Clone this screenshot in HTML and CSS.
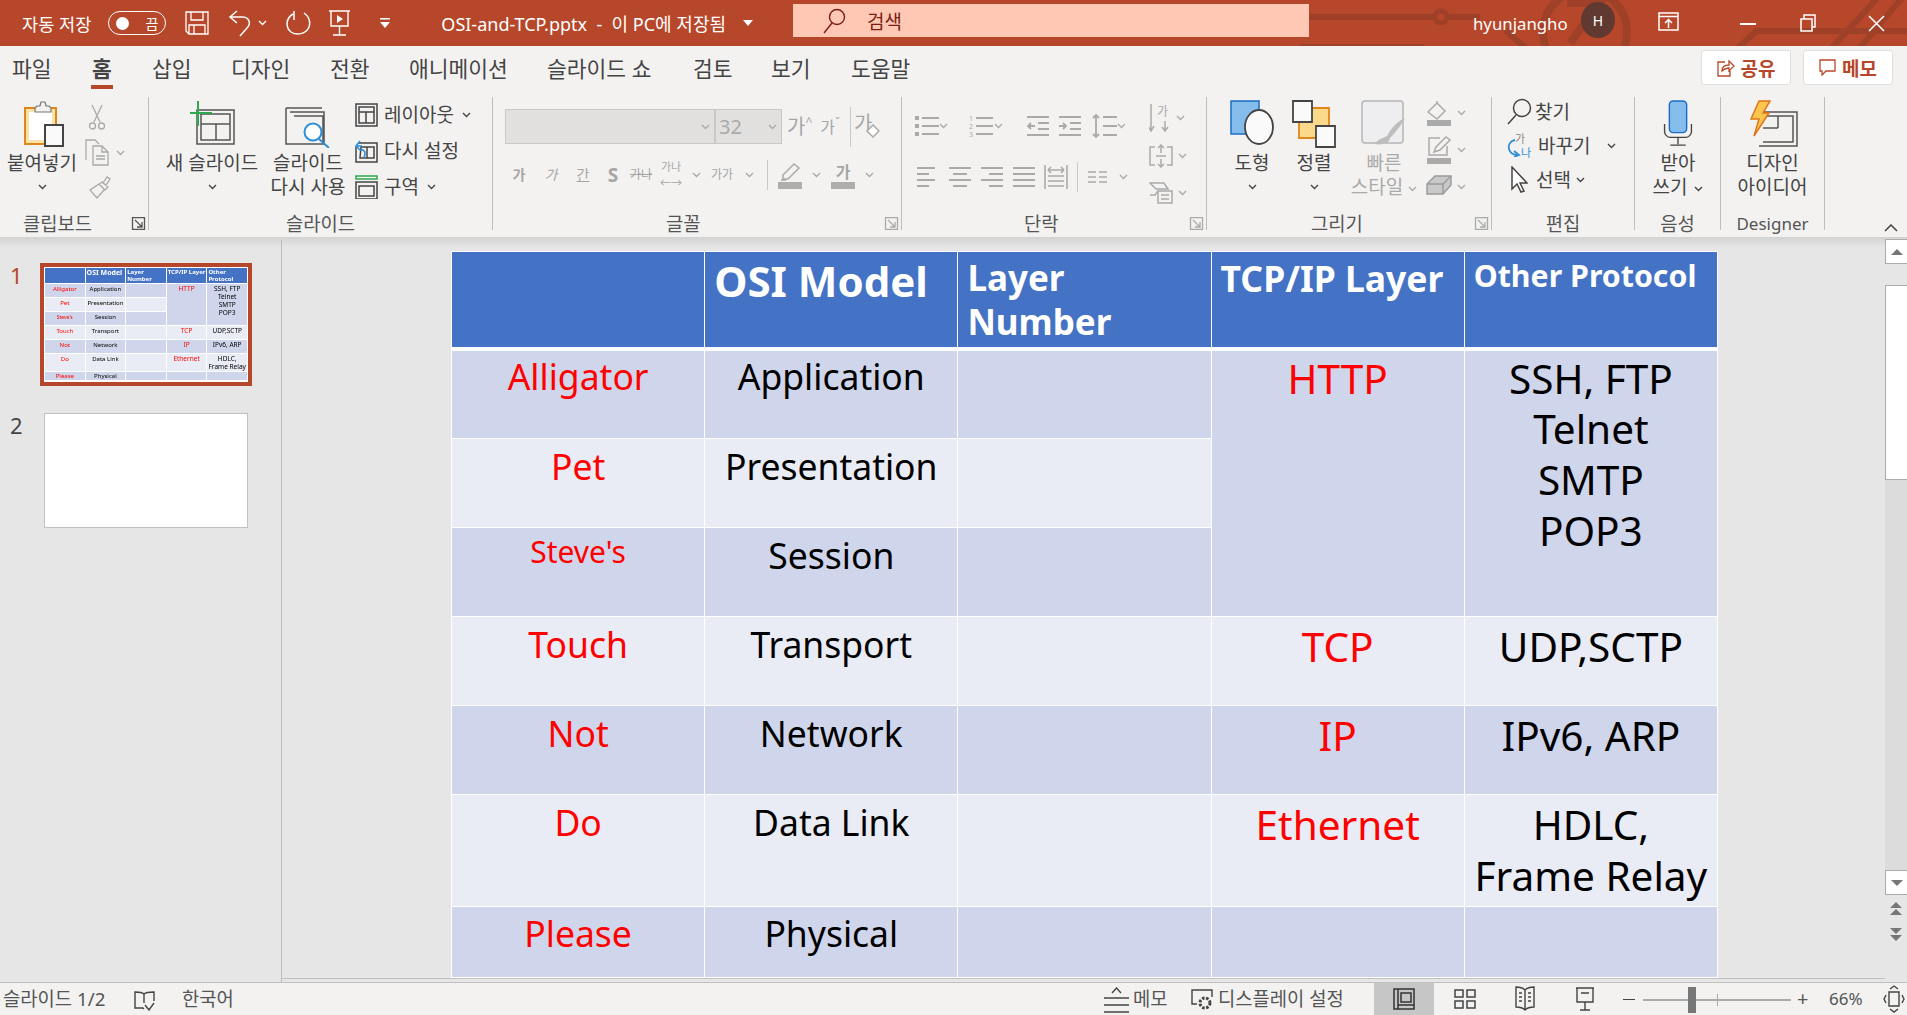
FILE: index.html
```html
<!DOCTYPE html>
<html lang="ko">
<head>
<meta charset="UTF-8">
<title>OSI-and-TCP.pptx - PowerPoint</title>
<link rel="stylesheet" href="styles.css">
</head>
<body>
<svg class="sprite">
  <symbol id="chev" viewBox="0 0 9 6"><path d="M1 1l3.5 3.5L8 1" fill="none" stroke="currentColor" stroke-width="1.4"/></symbol>
  <symbol id="launch" viewBox="0 0 13 13"><path d="M.5 12.500V.5h12v12z M3 3l7 7 M10 5v5H5" fill="none" stroke="currentColor" stroke-width="1.300"/></symbol>
</svg>

<header class="titlebar">
  <svg class="circuit" width="607" height="46" viewBox="0 0 607 46" fill="none" stroke="#9f4029" stroke-width="6">
    <path d="M0 17H133M147 17H180"/>
    <circle cx="141" cy="17" r="6" stroke-width="5"/>
    <path d="M0 47H122L135 55"/>
    <path d="M205 30L228 50"/>
    <circle cx="285" cy="32" r="42" stroke-width="8"/>
    <path d="M267 3H300L270 43" stroke-width="8"/>
    <path d="M436 50L456 31H607M530 50L580 -5M558 50L607 -8"/>
  </svg>
  <span class="autosave">자동 저장</span>
  <span class="toggle"><i class="toggle-dot"></i><b class="toggle-text">끔</b></span>
  <svg class="qa qa-save" width="24" height="24" viewBox="0 0 24 24" fill="none" stroke="#fff" stroke-width="1.300"><path d="M1 1h22v22H4l-3-3zM6 1v8h12V1M4 23v-9h16v9M9 14v9"/></svg>
  <svg class="qa qa-undo" width="25" height="28" viewBox="0 0 25 28" fill="none" stroke="#fff" stroke-width="1.500"><path d="M9 2L2 8l7 6M2 8h12c8 0 9 7 5 11l-7 8"/></svg>
  <svg class="qa-chev" width="9" height="6"><use href="#chev"/></svg>
  <svg class="qa qa-redo" width="26" height="28" viewBox="0 0 26 28" fill="none" stroke="#fff" stroke-width="1.500"><path d="M9 2v9M8 5C1 9 0 18 6 23c6 4 15 2 18-5 2-6-1-11-5-14"/></svg>
  <svg class="qa qa-show" width="23" height="28" viewBox="0 0 23 28" fill="none" stroke="#fff" stroke-width="1.400"><path d="M1 2h21M3 2v15h17V2M11.500 17v9M5 26h13"/><path d="M9 6l6 4-6 4z" fill="#fff" stroke="none"/></svg>
  <svg class="qa qa-more" width="10" height="10" viewBox="0 0 10 10" fill="#fff"><path d="M0 0h10v1.500H0zM0 4h10L5 10z"/></svg>
  <span class="filename">OSI-and-TCP.pptx &nbsp;-&nbsp; 이 PC에 저장됨</span>
  <i class="caret"></i>
  <div class="search">
    <svg width="24" height="26" viewBox="0 0 24 26" fill="none" stroke="#7b1f12" stroke-width="1.400"><circle cx="15" cy="9" r="7.500"/><path d="M10 15L2 25"/></svg>
    <span>검색</span>
  </div>
  <span class="user">hyunjangho</span>
  <span class="avatar">H</span>
  <svg class="win win-ribbon" width="21" height="19" viewBox="0 0 21 19" fill="none" stroke="#fff" stroke-width="1.500"><path d="M1 1h19v17H1zM1 4.500h19M10.500 16V8M7 11l3.500-3.500L14 11"/></svg>
  <i class="win win-min"></i>
  <svg class="win win-restore" width="16" height="18" viewBox="0 0 16 18" fill="none" stroke="#fff" stroke-width="1.500"><path d="M1 5h11v12H1zM4 5V1h11v12h-3"/></svg>
  <svg class="win win-close" width="17" height="17" viewBox="0 0 17 17" fill="none" stroke="#fff" stroke-width="1.500"><path d="M1 1l15 15M16 1L1 16"/></svg>
</header>

<nav class="tabs">
  <span class="tab tab-file">파일</span>
  <span class="tab tab-home">홈</span>
  <span class="tab tab-insert">삽입</span>
  <span class="tab tab-design">디자인</span>
  <span class="tab tab-trans">전환</span>
  <span class="tab tab-anim">애니메이션</span>
  <span class="tab tab-show">슬라이드 쇼</span>
  <span class="tab tab-review">검토</span>
  <span class="tab tab-view">보기</span>
  <span class="tab tab-help">도움말</span>
  <span class="action action-share">
    <svg width="18" height="18" viewBox="0 0 18 18" fill="none" stroke="#b7472a" stroke-width="1.300"><path d="M8 3H1v14h12v-5M5 12c0-4 3-6 7-6V2l5 5-5 5V9c-3 0-5 1-7 3z"/></svg>
    공유
  </span>
  <span class="action action-memo">
    <svg width="17" height="17" viewBox="0 0 17 17" fill="none" stroke="#b7472a" stroke-width="1.300"><path d="M1 1h15v11H7l-4 4v-4H1z"/></svg>
    메모
  </span>
</nav>

<section class="ribbon">

  <div class="group g-clip">
    <div class="group-body">
      <div class="big big-paste">
        <svg width="44" height="46" viewBox="0 0 44 46"><path d="M1 7h31v36H1z" fill="#fbe3a8" stroke="#e0861a" stroke-width="2"/><path d="M5 11h23v28H5z" fill="#fff"/><path d="M11 7l2-2h3l1-4h4l1 4h3l2 2v4H11z" fill="#f3f2f1" stroke="#777" stroke-width="1.200"/><path d="M21 24h18v21H21z" fill="#fafafa" stroke="#444" stroke-width="2"/></svg>
        <span class="big-text">붙여넣기</span>
        <svg class="chev" width="9" height="6"><use href="#chev"/></svg>
      </div>
      <div class="clip-tools">
        <svg class="clip-cut" width="18" height="26" viewBox="0 0 18 26" fill="none" stroke="#a9a9a9" stroke-width="1.300"><path d="M4 1l8 17M14 1L6 18"/><circle cx="4.500" cy="22" r="3"/><circle cx="13.500" cy="22" r="3"/></svg>
        <span class="clip-copy">
          <svg width="26" height="27" viewBox="0 0 26 27" fill="none" stroke="#a9a9a9" stroke-width="1.300"><path d="M1 21V1h9l4 4M8 7h9l6 6v13H8zM17 7v6h6M11 17h9M11 20h9"/></svg>
          <svg class="chev-off" width="9" height="6"><use href="#chev"/></svg>
        </span>
        <svg class="clip-brush" width="24" height="24" viewBox="0 0 24 24" fill="none" stroke="#a9a9a9" stroke-width="1.300"><path d="M16 8l4-6 3 2-4 6zM15 7l6 5-3 3-6-6zM12 9l-9 6 7 8 7-8"/></svg>
      </div>
    </div>
    <div class="group-label label-clip">클립보드<svg class="launch" width="15" height="13"><use href="#launch"/></svg></div>
  </div>

  <div class="group g-slide">
    <div class="group-body">
      <div class="big big-new">
        <svg width="46" height="48" viewBox="0 0 46 48" fill="none"><path d="M8 10h37v34H8z M12 14h29v26H12zM12 24h29M27 24v16" stroke="#555" stroke-width="1.500"/><path d="M9 1v25M1 13h22" stroke="#2fa84f" stroke-width="2"/></svg>
        <span class="big-text">새 슬라이드</span>
        <svg class="chev" width="9" height="6"><use href="#chev"/></svg>
      </div>
      <div class="big big-reuse">
        <svg width="46" height="48" viewBox="0 0 46 48" fill="none"><path d="M1 8h36M1 8v36h8M5 12h34v32H5M9 16h29v28" stroke="#555" stroke-width="1.500"/><circle cx="28" cy="32" r="8.500" fill="#fff" stroke="#2e8fd6" stroke-width="2"/><path d="M34 39l10 9" stroke="#2e8fd6" stroke-width="2"/></svg>
        <span class="big-text">슬라이드<br>다시 사용</span>
      </div>
      <div class="small-col small-slide">
        <span class="small">
          <svg width="23" height="24" viewBox="0 0 23 24" fill="none" stroke="#444" stroke-width="1.500"><path d="M1 1h21v22H1zM4 4h15v16H4zM4 9h15M11 9v11"/></svg>
          레이아웃 <svg class="chev" width="9" height="6"><use href="#chev"/></svg>
        </span>
        <span class="small">
          <svg width="23" height="24" viewBox="0 0 23 24" fill="none"><path d="M3 4h19v19H1V8M6 8h13v11H5zM12 8v11" stroke="#444" stroke-width="1.500"/><path d="M7 7H1l4-5M1 7l4 4c5-1 6 3 4 7" stroke="#2e8fd6" stroke-width="1.600"/></svg>
          다시 설정
        </span>
        <span class="small">
          <svg width="23" height="24" viewBox="0 0 23 24" fill="none" stroke="#444" stroke-width="1.500"><path d="M1 7h21v17H1zM4 11h15v10H4z"/><path d="M1 1h21v3H1z" stroke="#2fa84f"/></svg>
          구역 <svg class="chev" width="9" height="6"><use href="#chev"/></svg>
        </span>
      </div>
    </div>
    <div class="group-label label-slide">슬라이드</div>
  </div>

  <div class="group g-font">
    <div class="group-body font-body">
      <div class="font-row1">
        <span class="font-box font-name"><svg class="chev-off" width="9" height="6"><use href="#chev"/></svg></span>
        <span class="font-box font-size">32<svg class="chev-off" width="9" height="6"><use href="#chev"/></svg></span>
        <span class="glyph glyph-lg">가<sup>^</sup></span>
        <span class="glyph glyph-md">가<sup>ˇ</sup></span>
        <i class="vsep vsep-tall"></i>
        <span class="glyph-clear">
          <span class="glyph glyph-lg">가</span>
          <svg width="15" height="15" viewBox="0 0 15 15" fill="#fff" stroke="#aaa" stroke-width="1.500"><path d="M8 1l6 6-6 6-6-6z"/></svg>
        </span>
      </div>
      <div class="font-row2">
        <b class="glyph">가</b>
        <em class="glyph">가</em>
        <u class="glyph">간</u>
        <span class="glyph glyph-s">S</span>
        <s class="glyph glyph-xs">가나</s>
        <span class="glyph-space"><span>가나</span><i>←→</i></span>
        <svg class="chev-off" width="9" height="6"><use href="#chev"/></svg>
        <span class="glyph glyph-xs">가가</span>
        <svg class="chev-off" width="9" height="6"><use href="#chev"/></svg>
        <i class="vsep"></i>
        <span class="colour">
          <svg width="22" height="20" viewBox="0 0 22 20" fill="none" stroke="#aaa" stroke-width="1.500"><path d="M4 13L15 2l5 4L9 17H4zM2 18h5"/></svg>
          <i class="colour-bar"></i>
        </span>
        <svg class="chev-off" width="9" height="6"><use href="#chev"/></svg>
        <span class="colour">
          <b class="glyph">가</b>
          <i class="colour-bar"></i>
        </span>
        <svg class="chev-off" width="9" height="6"><use href="#chev"/></svg>
      </div>
    </div>
    <div class="group-label label-font">글꼴<svg class="launch launch-off" width="15" height="13"><use href="#launch"/></svg></div>
  </div>

  <div class="group g-para">
    <div class="group-body para-body">
      <div class="para-rows">
        <div class="para-row1">
          <svg width="24" height="24" viewBox="0 0 24 24" stroke="#aaa" stroke-width="2" fill="none"><path d="M7 4h17M7 12h17M7 20h17"/><path d="M0 2h4v4H0zM0 10h4v4H0zM0 18h4v4H0z" fill="#aaa" stroke="none"/></svg>
          <svg class="chev-off" width="9" height="6"><use href="#chev"/></svg>
          <svg width="24" height="24" viewBox="0 0 24 24" stroke="#aaa" stroke-width="2" fill="none"><path d="M7 4h17M7 12h17M7 20h17"/><text x="0" y="7" class="svg-num">1</text><text x="0" y="15" class="svg-num">2</text><text x="0" y="23" class="svg-num">3</text></svg>
          <svg class="chev-off" width="9" height="6"><use href="#chev"/></svg>
          <svg width="23" height="24" viewBox="0 0 23 24" stroke="#aaa" stroke-width="1.800" fill="none"><path d="M1 3h22M1 21h22M12 9h11M12 15h11M9 12H2M5 9l-3 3 3 3"/></svg>
          <svg width="23" height="24" viewBox="0 0 23 24" stroke="#aaa" stroke-width="1.800" fill="none"><path d="M1 3h22M1 21h22M12 9h11M12 15h11M1 12h7M5 9l3 3-3 3"/></svg>
          <svg width="25" height="24" viewBox="0 0 25 24" stroke="#aaa" stroke-width="1.800" fill="none"><path d="M11 3h14M11 12h14M11 21h14M4 1v22M1 4l3-3 3 3M1 20l3 3 3-3"/></svg>
          <svg class="chev-off" width="9" height="6"><use href="#chev"/></svg>
        </div>
        <div class="para-row2">
          <svg width="18" height="22" viewBox="0 0 18 22" stroke="#aaa" stroke-width="2"><path d="M0 2h18M0 8h12M0 14h18M0 20h12"/></svg>
          <svg width="22" height="22" viewBox="0 0 22 22" stroke="#aaa" stroke-width="2"><path d="M0 2h22M4 8h14M0 14h22M4 20h14"/></svg>
          <svg width="22" height="22" viewBox="0 0 22 22" stroke="#aaa" stroke-width="2"><path d="M0 2h22M8 8h14M0 14h22M8 20h14"/></svg>
          <svg width="22" height="22" viewBox="0 0 22 22" stroke="#aaa" stroke-width="2"><path d="M0 2h22M0 8h22M0 14h22M0 20h22"/></svg>
          <svg width="24" height="24" viewBox="0 0 24 24" stroke="#aaa" stroke-width="1.600" fill="none"><path d="M1 0v24M23 0v24M4 11h16M4 16h16M4 21h16M4 5h16M4 5l3-3M4 5l3 3M20 5l-3-3M20 5l-3 3"/></svg>
          <i class="vsep"></i>
          <svg width="19" height="14" viewBox="0 0 19 14" stroke="#aaa" stroke-width="1.600"><path d="M0 2h8M11 2h8M0 7h8M11 7h8M0 12h8M11 12h8"/></svg>
          <svg class="chev-off" width="9" height="6"><use href="#chev"/></svg>
        </div>
      </div>
      <div class="para-side">
        <span class="para-tool">
          <svg width="22" height="30" viewBox="0 0 22 30" fill="none" stroke="#aaa" stroke-width="1.500"><path d="M2 1v26M-1 23l3 5 3-5M16 18v10M13 24l3 4 3-4"/><text x="8" y="13" class="svg-ko">가</text></svg>
          <svg class="chev-off" width="9" height="6"><use href="#chev"/></svg>
        </span>
        <span class="para-tool">
          <svg width="24" height="24" viewBox="0 0 24 24" fill="none" stroke="#aaa" stroke-width="1.500"><path d="M6 3H1v18h5M18 3h5v18h-5M7 12h10M12 1v8M9 4l3-3 3 3M12 15v8M9 20l3 3 3-3"/></svg>
          <svg class="chev-off" width="9" height="6"><use href="#chev"/></svg>
        </span>
        <span class="para-tool">
          <svg width="24" height="22" viewBox="0 0 24 22" fill="none" stroke="#aaa" stroke-width="1.500"><path d="M1 1h14l4 6H7zM1 13h5l3-4"/><path d="M9 9h14v12H9zM12 13h8M12 17h8"/></svg>
          <svg class="chev-off" width="9" height="6"><use href="#chev"/></svg>
        </span>
      </div>
    </div>
    <div class="group-label label-para">단락<svg class="launch launch-off" width="15" height="13"><use href="#launch"/></svg></div>
  </div>

  <div class="group g-draw">
    <div class="group-body">
      <div class="big big-shape">
        <svg width="44" height="48" viewBox="0 0 44 48"><path d="M1 1h28v33H1z" fill="#84bcec" stroke="#1b6ec2" stroke-width="1.500"/><ellipse cx="29" cy="27" rx="14" ry="17" fill="#fafafa" stroke="#444" stroke-width="1.800"/></svg>
        <span class="big-text">도형</span>
        <svg class="chev" width="9" height="6"><use href="#chev"/></svg>
      </div>
      <div class="big big-arrange">
        <svg width="44" height="48" viewBox="0 0 44 48"><path d="M7 8h30v30H7z" fill="#fbd98a" stroke="#e0861a" stroke-width="1.800"/><path d="M1 1h19v21H1zM24 26h19v21H24z" fill="#fafafa" stroke="#444" stroke-width="1.800"/></svg>
        <span class="big-text">정렬</span>
        <svg class="chev" width="9" height="6"><use href="#chev"/></svg>
      </div>
      <div class="big big-quick">
        <svg width="46" height="48" viewBox="0 0 46 48" fill="none"><rect x="1" y="1" width="41" height="42" rx="3" fill="#eeeef0" stroke="#b5b5b5" stroke-width="1.500"/><path d="M44 18C38 20 30 28 26 36l-4 2c-4 1-7 4-9 6 6 1 11 0 14-2 2-2 2-4 2-4 6-6 12-14 15-20z" fill="#bdbdbd"/></svg>
        <span class="big-text big-off">빠른<br>스타일 <svg class="chev-off" width="9" height="6"><use href="#chev"/></svg></span>
      </div>
      <div class="draw-side">
        <span class="para-tool">
          <svg width="26" height="26" viewBox="0 0 26 26" fill="none" stroke="#aaa" stroke-width="1.500"><path d="M2 12l9-9 8 8-8 8zM11 3V1"/><path d="M1 20h24v6H1z" fill="#aaa" stroke="none"/></svg>
          <svg class="chev-off" width="9" height="6"><use href="#chev"/></svg>
        </span>
        <span class="para-tool">
          <svg width="26" height="28" viewBox="0 0 26 28" fill="none" stroke="#aaa" stroke-width="1.500"><path d="M14 2H3v17h18V10M8 16l2-5L20 1l4 3-10 10z"/><path d="M1 22h24v6H1z" fill="#aaa" stroke="none"/></svg>
          <svg class="chev-off" width="9" height="6"><use href="#chev"/></svg>
        </span>
        <span class="para-tool">
          <svg width="26" height="24" viewBox="0 0 26 24" stroke="#999" stroke-width="1.400"><path d="M1 9l8-8h16v9l-8 9H1z" fill="#c9c9c9"/><path d="M1 9h16v10M17 9l8-8" fill="none"/></svg>
          <svg class="chev-off" width="9" height="6"><use href="#chev"/></svg>
        </span>
      </div>
    </div>
    <div class="group-label label-draw">그리기<svg class="launch launch-off" width="15" height="13"><use href="#launch"/></svg></div>
  </div>

  <div class="group g-edit">
    <div class="group-body small-col edit-col">
      <span class="small">
        <svg width="25" height="27" viewBox="0 0 25 27" fill="none" stroke="#444" stroke-width="1.500"><circle cx="15" cy="10" r="8.500"/><path d="M9 17L1 26"/></svg>
        찾기
      </span>
      <span class="small">
        <span class="replace-ico"><i>가</i><svg width="17" height="18" viewBox="0 0 17 18" fill="none" stroke="#2e8fd6" stroke-width="1.800"><path d="M8 1C3 2 1 6 2 10s5 6 9 6M7 12l5 4-5 2"/></svg><b>나</b></span>
        바꾸기 <svg class="chev chev-far" width="9" height="6"><use href="#chev"/></svg>
      </span>
      <span class="small">
        <svg class="pointer" width="18" height="27" viewBox="0 0 18 27" fill="#fff" stroke="#444" stroke-width="1.500"><path d="M2 1v22l5-5 4 8 3-1-4-8h7z"/></svg>
        선택 <svg class="chev" width="9" height="6"><use href="#chev"/></svg>
      </span>
    </div>
    <div class="group-label">편집</div>
  </div>

  <div class="group g-voice">
    <div class="group-body">
      <div class="big big-mic">
        <svg width="30" height="50" viewBox="0 0 30 50" fill="none"><rect x="6" y="1" width="18" height="33" rx="4" fill="#84bcec" stroke="#1b6ec2" stroke-width="1.500"/><path d="M1 25v8c0 3 3 6 6 6h16c3 0 6-3 6-6v-8M15 39v7M7 47h16" stroke="#444" stroke-width="1.400"/></svg>
        <span class="big-text">받아<br>쓰기 <svg class="chev" width="9" height="6"><use href="#chev"/></svg></span>
      </div>
    </div>
    <div class="group-label">음성</div>
  </div>

  <div class="group g-ideas">
    <div class="group-body">
      <div class="big big-ideas">
        <svg width="50" height="48" viewBox="0 0 50 48" fill="none"><path d="M11 12h38v34H11M15 16h30v26H15M30 16v12M30 28H15" stroke="#555" stroke-width="1.500"/><path d="M11 1h11l-7 12h6L6 36l5-17H3z" fill="#fbc550" stroke="#e0761a" stroke-width="1.500"/></svg>
        <span class="big-text">디자인<br>아이디어</span>
      </div>
    </div>
    <div class="group-label label-latin">Designer</div>
  </div>

  <svg class="collapse" width="14" height="8" viewBox="0 0 14 8" fill="none" stroke="#444" stroke-width="1.500"><path d="M1 7l6-6 6 6"/></svg>
</section>

<main class="main">
  <aside class="thumbs">
    <div class="thumb-row">
      <span class="thumb-num thumb-num-on">1</span>
      <div class="thumb thumb-on">
        <table class="slide-table mini">
          <tr class="head"><td></td><td class="h-osi">OSI Model</td><td class="h-layer">Layer Number</td><td class="h-tcp">TCP/IP Layer</td><td class="h-other">Other Protocol</td></tr>
          <tr class="dark r-one"><td class="red">Alligator</td><td>Application</td><td></td><td class="red big-cell" rowspan="3">HTTP</td><td class="big-cell" rowspan="3">SSH, FTP<br>Telnet<br>SMTP<br>POP3</td></tr>
          <tr class="light"><td class="red">Pet</td><td>Presentation</td><td></td></tr>
          <tr class="dark"><td class="red tiny">Steve's</td><td>Session</td><td></td></tr>
          <tr class="light"><td class="red">Touch</td><td>Transport</td><td></td><td class="red big-cell">TCP</td><td class="big-cell">UDP,SCTP</td></tr>
          <tr class="dark"><td class="red">Not</td><td>Network</td><td></td><td class="red big-cell">IP</td><td class="big-cell">IPv6, ARP</td></tr>
          <tr class="light r-tall"><td class="red">Do</td><td>Data Link</td><td></td><td class="red big-cell">Ethernet</td><td class="big-cell">HDLC,<br>Frame Relay</td></tr>
          <tr class="dark r-last"><td class="red">Please</td><td>Physical</td><td></td><td></td><td></td></tr>
        </table>
      </div>
    </div>
    <div class="thumb-row thumb-row-2">
      <span class="thumb-num">2</span>
      <div class="thumb thumb-empty"></div>
    </div>
  </aside>

  <div class="canvas">
    <table class="slide-table">
      <tr class="head"><td></td><td class="h-osi">OSI Model</td><td class="h-layer">Layer Number</td><td class="h-tcp">TCP/IP Layer</td><td class="h-other">Other Protocol</td></tr>
      <tr class="dark r-one"><td class="red">Alligator</td><td>Application</td><td></td><td class="red big-cell" rowspan="3">HTTP</td><td class="big-cell" rowspan="3">SSH, FTP<br>Telnet<br>SMTP<br>POP3</td></tr>
      <tr class="light"><td class="red">Pet</td><td>Presentation</td><td></td></tr>
      <tr class="dark"><td class="red tiny">Steve's</td><td>Session</td><td></td></tr>
      <tr class="light"><td class="red">Touch</td><td>Transport</td><td></td><td class="red big-cell">TCP</td><td class="big-cell">UDP,SCTP</td></tr>
      <tr class="dark"><td class="red">Not</td><td>Network</td><td></td><td class="red big-cell">IP</td><td class="big-cell">IPv6, ARP</td></tr>
      <tr class="light r-tall"><td class="red">Do</td><td>Data Link</td><td></td><td class="red big-cell">Ethernet</td><td class="big-cell">HDLC,<br>Frame Relay</td></tr>
      <tr class="dark r-last"><td class="red">Please</td><td>Physical</td><td></td><td></td><td></td></tr>
    </table>
  </div>

  <div class="scrollbar">
    <span class="sb-btn"><i class="tri-up"></i></span>
    <span class="sb-thumb"></span>
    <span class="sb-track"></span>
    <span class="sb-btn"><i class="tri-down"></i></span>
    <span class="sb-page"><i class="tri-up"></i><i class="tri-up tri-stack"></i></span>
    <span class="sb-page"><i class="tri-down"></i><i class="tri-down tri-stack"></i></span>
  </div>
</main>

<footer class="status">
  <span class="st-count">슬라이드 1/2</span>
  <svg class="st-book" width="21" height="20" viewBox="0 0 21 20" fill="none" stroke="#444" stroke-width="1.400"><path d="M10 3C8 1 4 1 1 1v16h8l1 1M10 3c2-2 6-2 10-2v9M10 3v9M11 14l4 5 5-7"/></svg>
  <span class="st-lang">한국어</span>
  <svg class="st-memo" width="25" height="26" viewBox="0 0 25 26" fill="none" stroke="#444" stroke-width="1.400"><path d="M8 6l4.500-5L17 6M0 11h25M0 18h25M0 25h25"/></svg>
  <span class="st-memo-text">메모</span>
  <svg class="st-display" width="23" height="22" viewBox="0 0 23 22" fill="none" stroke="#444" stroke-width="1.400"><path d="M6 15H1V1h20v7"/><circle cx="14" cy="14" r="5" stroke-width="3" stroke-dasharray="2.500 1.500"/></svg>
  <span class="st-display-text">디스플레이 설정</span>
  <span class="view view-on"><svg width="22" height="22" viewBox="0 0 22 22" fill="none" stroke="#333" stroke-width="1.500"><path d="M1 1h20v20H1zM5 1v20M8 5h10v9H8zM5 17h16"/></svg></span>
  <span class="view view-sort"><svg width="22" height="22" viewBox="0 0 22 22" fill="none" stroke="#444" stroke-width="1.500"><path d="M1 2h8v7H1zM13 2h8v7h-8zM1 13h8v7H1zM13 13h8v7h-8z"/></svg></span>
  <span class="view view-read"><svg width="20" height="26" viewBox="0 0 20 26" fill="none" stroke="#444" stroke-width="1.400"><path d="M10 4C8 2 4 1 1 1v20c3 0 7 1 9 3 2-2 6-3 9-3V1c-3 0-7 1-9 3zM10 4v20M4 7h3M4 11h3M4 15h3M13 7h3M13 11h3M13 15h3"/></svg></span>
  <span class="view view-show"><svg width="20" height="24" viewBox="0 0 20 24" fill="none" stroke="#444" stroke-width="1.400"><path d="M1 1h18M2 1v14h16V1M10 15v8M5 23h10M6 6h8"/></svg></span>
  <i class="zoom-minus"></i>
  <span class="slider"><i class="slider-tick"></i><i class="slider-knob"></i></span>
  <span class="zoom-plus">+</span>
  <span class="zoom-val">66%</span>
  <svg class="st-fit" width="22" height="28" viewBox="0 0 22 28" fill="none" stroke="#444" stroke-width="1.400"><path d="M6 7h10v14H6zM7 4l4-3 4 3M7 24l4 3 4-3M3 10l-2 4 2 4M19 10l2 4-2 4"/></svg>
</footer>
</body>
</html>
```

FILE: styles.css
```css
* {
  box-sizing: border-box;
}
html, body {
  margin: 0;
  height: 100%;
}
body {
  width: 1907px;
  height: 1015px;
  overflow: hidden;
  display: flex;
  flex-direction: column;
  font-family: "Noto Sans", "Noto Sans CJK KR", sans-serif;
  font-size: 19px;
  color: #444;
  background-color: #f3f2f1;
}
i {
  font-style: normal;
}
svg {
  flex: none;
  display: block;
}
.sprite {
  display: none;
}

/* title bar */
.titlebar {
  position: relative;
  height: 46px;
  flex: none;
  display: flex;
  align-items: center;
  color: #fff;
  background-color: #b7472a;
  overflow: hidden;
}
.circuit {
  position: absolute;
  top: 0;
  right: 0;
}
.titlebar > *:not(.circuit) {
  position: relative;
}
.autosave {
  margin-left: 22px;
  font-size: 17.6px;
}
.toggle {
  width: 58px;
  height: 24px;
  margin-left: 17px;
  padding: 0 7px;
  display: flex;
  align-items: center;
  justify-content: space-between;
  border: 1px solid #fff;
  border-radius: 12px;
}
.toggle-dot {
  width: 13px;
  height: 13px;
  border-radius: 50%;
  background-color: #fff;
}
.toggle-text {
  font-size: 14px;
  font-weight: 400;
}
.qa-save { margin-left: 19px; }
.qa-undo { margin-left: 19px; }
.qa-chev { margin-left: 5px; }
.qa-redo { margin-left: 18px; }
.qa-show { margin-left: 17px; }
.qa-more { margin-left: 29px; }
.filename {
  margin-left: 51px;
  font-size: 18px;
  white-space: nowrap;
}
.caret {
  width: 0;
  height: 0;
  margin-left: 17px;
  border: 5px solid transparent;
  border-top: 6px solid #fff;
  border-bottom: 0;
}
.search {
  position: absolute !important;
  left: 793px;
  top: 4px;
  width: 516px;
  height: 33px;
  padding-left: 29px;
  display: flex;
  align-items: center;
  gap: 21px;
  font-size: 19px;
  color: #7b1f12;
  background-color: #fec8b4;
}
.user {
  position: absolute !important;
  left: 1473px;
  font-size: 16.8px;
}
.avatar {
  position: absolute !important;
  left: 1581px;
  top: 2px;
  width: 34px;
  height: 36px;
  display: flex;
  align-items: center;
  justify-content: center;
  border-radius: 50%;
  font-size: 14px;
  background-color: #603a30;
}
.win {
  position: absolute !important;
}
.win-ribbon { left: 1658px; top: 12px; }
.win-min { left: 1740px; top: 23px; width: 16px; height: 2px; background-color: #fff; }
.win-restore { left: 1800px; top: 14px; }
.win-close { left: 1868px; top: 15px; }

/* tabs */
.tabs {
  position: relative;
  height: 46px;
  flex: none;
  display: flex;
  align-items: center;
  font-size: 21.5px;
}
.tab {
  position: absolute;
  top: 9px;
  line-height: 28px;
  white-space: nowrap;
}
.tab-file { left: 12px; }
.tab-home { left: 92px; font-weight: 700; }
.tab-home::after {
  content: "";
  position: absolute;
  left: -1px;
  right: -1px;
  top: 30px;
  height: 4px;
  background-color: #b7472a;
}
.tab-insert { left: 152px; }
.tab-design { left: 231px; }
.tab-trans { left: 330px; }
.tab-anim { left: 409px; }
.tab-show { left: 547px; }
.tab-review { left: 693px; }
.tab-view { left: 771px; }
.tab-help { left: 851px; }
.action {
  position: absolute;
  top: 4px;
  height: 35px;
  display: flex;
  align-items: center;
  justify-content: center;
  gap: 6px;
  font-size: 19px;
  font-weight: 700;
  color: #b7472a;
  background-color: #fff;
  border: 1px solid #e1dfdd;
  border-radius: 3px;
}
.action-share { left: 1701px; width: 90px; }
.action-memo { left: 1803px; width: 90px; }

/* ribbon */
.ribbon {
  height: 145px;
  flex: none;
  display: flex;
  padding: 5px 0 7px;
  line-height: 24px;
  position: relative;
}
.group {
  flex: none;
  display: flex;
  flex-direction: column;
  border-right: 1px solid #bdbdbd;
}
.group-body {
  flex: 1;
  display: flex;
  min-height: 0;
}
.group-label {
  height: 18px;
  position: relative;
  font-size: 18.8px;
  line-height: 24px;
  text-align: center;
  color: #555;
}
.label-latin {
  font-size: 17px;
}
.launch {
  position: absolute;
  right: 2px;
  top: 5px;
  color: #555;
}
.launch-off {
  color: #aaa;
}
.g-clip { width: 149px; }
.g-slide { width: 344px; }
.g-font { width: 409px; }
.g-para { width: 305px; }
.g-draw { width: 285px; }
.g-edit { width: 143px; }
.g-voice { width: 86px; }
.g-ideas { width: 104px; }
.label-clip { text-align: left; padding-left: 23px; }
.label-slide { text-align: left; padding-left: 137px; }
.label-font { text-align: left; padding-left: 173px; }
.label-para { text-align: left; padding-left: 122px; }
.label-draw { text-align: left; padding-left: 104px; }

.big {
  flex: none;
  display: flex;
  flex-direction: column;
  align-items: center;
  padding-top: 3px;
}
.big > svg:first-child {
  height: 48px;
  margin-bottom: 3px;
}
.big-text {
  text-align: center;
  white-space: nowrap;
}
.big-text .chev,
.big-text .chev-off {
  display: inline-block;
  vertical-align: middle;
}
.big-off {
  color: #aaa;
}
.big > .chev {
  margin-top: 9px;
}
.chev {
  color: #444;
}
.chev-off {
  color: #aaa;
}

.big-paste { width: 74px; margin-left: 5px; }
.big-paste > svg:first-child { margin-left: 8px; }
.clip-tools {
  margin-left: 6px;
  padding-top: 7px;
  display: flex;
  flex-direction: column;
  gap: 9px;
}
.clip-cut { margin-left: 3px; }
.clip-brush { margin-left: 2px; }
.clip-copy {
  display: flex;
  align-items: center;
  gap: 5px;
}
.big-new { width: 96px; margin-left: 15px; }
.big-reuse { width: 80px; margin-left: 8px; }
.small-col {
  display: flex;
  flex-direction: column;
  gap: 11px;
}
.small-slide {
  margin-left: 7px;
  padding-top: 5px;
}
.small {
  height: 25px;
  display: flex;
  align-items: center;
  gap: 6px;
  white-space: nowrap;
}
.small .chev {
  margin-left: 2px;
}

/* font group */
.font-body {
  flex-direction: column;
  padding: 12px 0 0 12px;
}
.font-row1 {
  display: flex;
  align-items: center;
  height: 35px;
}
.font-box {
  height: 35px;
  display: flex;
  align-items: center;
  justify-content: flex-end;
  padding-right: 4px;
  color: #aaa;
  background-color: #e1e0de;
  border: 1px solid #c8c8c8;
}
.font-name { width: 210px; }
.font-size {
  width: 67px;
  justify-content: space-between;
  padding-left: 3px;
  font-size: 20px;
}
.glyph {
  color: #a6a6a6;
  font-size: 14px;
  line-height: 18px;
}
.glyph sup {
  font-size: 12px;
  line-height: 0;
}
.glyph-lg { font-size: 20px; margin-left: 5px; }
.glyph-md { font-size: 16px; margin-left: 8px; }
.glyph-s { font-size: 19px; font-weight: 700; }
.glyph-xs { font-size: 12px; }
.vsep {
  width: 1px;
  height: 30px;
  background-color: #c8c8c8;
}
.vsep-tall {
  height: 40px;
  margin-left: 10px;
}
.glyph-clear {
  display: flex;
  align-items: flex-end;
  margin-left: 3px;
}
.glyph-clear .glyph-lg {
  margin: 0 -7px 6px 0;
}
.font-row2 {
  height: 40px;
  margin: 11px 0 0 -2px;
  display: grid;
  grid-template-columns: 32px 32px 32px 28px 28px 32px 18px 34px 20px 16px 30px 22px 32px 20px;
  align-items: center;
  justify-items: center;
}
.glyph-space {
  display: flex;
  flex-direction: column;
  font-size: 11px;
  line-height: 16px;
  color: #a6a6a6;
  text-align: center;
}
.colour {
  width: 24px;
  display: flex;
  flex-direction: column;
  align-items: center;
}
.colour-bar {
  width: 24px;
  height: 7px;
  background-color: #b0aeac;
}
.colour .glyph {
  font-size: 16px;
  line-height: 20px;
}

/* paragraph group */
.para-body {
  padding-top: 15px;
}
.para-rows {
  width: 240px;
  margin-left: 13px;
}
.para-row1 {
  height: 28px;
  display: grid;
  grid-template-columns: 24px 30px 25px 32px 32px 34px 25px 10px;
  align-items: center;
}
.para-row2 {
  height: 28px;
  margin-top: 22px;
  margin-left: 2px;
  display: grid;
  grid-template-columns: 32px 32px 32px 31px 33px 11px 31px 10px;
  align-items: center;
}
.svg-num {
  font-size: 7px;
  fill: #aaa;
  stroke: none;
}
.svg-ko {
  font-size: 12px;
  fill: #aaa;
  stroke: none;
}
.para-side {
  margin-left: -6px;
  margin-top: -13px;
  display: flex;
  flex-direction: column;
}
.para-tool {
  height: 38px;
  display: flex;
  align-items: center;
  gap: 5px;
}

/* drawing group */
.big-shape { width: 46px; margin-left: 22px; }
.big-arrange { width: 44px; margin-left: 17px; }
.big-quick { width: 70px; margin-left: 13px; }
.draw-side {
  margin-left: 7px;
  margin-top: -3px;
  display: flex;
  flex-direction: column;
}
.draw-side .para-tool {
  height: 37px;
}

/* editing group */
.edit-col {
  padding: 2px 0 0 15px;
  gap: 9px;
}
.edit-col .small {
  gap: 3px;
}
.replace-ico {
  position: relative;
  width: 26px;
  height: 26px;
  margin-right: 2px;
}
.replace-ico svg {
  position: absolute;
  left: 0;
  top: 6px;
}
.replace-ico i,
.replace-ico b {
  position: absolute;
  font-size: 11px;
  line-height: 12px;
  font-weight: 400;
}
.replace-ico i { left: 8px; top: 0; color: #888; }
.replace-ico b { left: 14px; top: 14px; color: #2e8fd6; }
.chev-far { margin-left: 14px !important; }
.pointer { margin: 0 5px 0 3px; }

.big-mic { width: 86px; }
.big-ideas { width: 103px; }
.big-text .chev {
  margin-left: 2px;
}
.collapse {
  position: absolute;
  right: 9px;
  bottom: 5px;
}

/* main area */
.main {
  flex: 1;
  min-height: 0;
  display: flex;
  background: linear-gradient(#d2d2d2, #e6e6e6 10px);
  border-bottom: 1px solid #c0c0c0;
}
.thumbs {
  width: 282px;
  flex: none;
  padding-top: 23px;
  border-right: 1px solid #bdbdbd;
  margin-top: 3px;
}
.thumb-row {
  display: flex;
  height: 123px;
}
.thumb-row-2 {
  margin-top: 27px;
  height: 115px;
}
.thumb-num {
  width: 40px;
  padding-left: 10px;
  font-size: 22px;
  line-height: 24px;
}
.thumb-num-on {
  color: #b7472a;
}
.thumb {
  background-color: #fff;
}
.thumb-on {
  width: 212px;
  height: 123px;
  border: 4px solid #b7472a;
}
.thumb-empty {
  width: 204px;
  height: 115px;
  margin-left: 4px;
  border: 1px solid #c0c0c0;
}

/* slide */
.canvas {
  flex: 1;
  padding: 14px 0 0 169px;
  border-bottom: 1px solid #c0c0c0;
  margin-bottom: 3px;
}
.slide-table {
  width: 1267px;
  table-layout: fixed;
  border-collapse: collapse;
  font-size: 35.500px;
  line-height: 50px;
  color: #000;
  text-align: center;
}
.slide-table td {
  padding: 2px 0 0;
  border: 1px solid #fff;
  vertical-align: top;
}
.head td {
  height: 97px;
  padding: 4px 0 0 9px;
  border-bottom: 4px solid #fff;
  text-align: left;
  font-weight: 700;
  color: #fff;
  background-color: #4472c4;
}
.dark td { background-color: #cfd5ea; }
.light td { background-color: #e9ebf5; }
.canvas .dark td,
.canvas .light td { height: 89px; }
.canvas .r-one td { height: 90px; padding-top: 0; }
.canvas .r-tall td { height: 112px; }
.canvas .r-last td { height: 71px; padding-top: 1px; }
.red { color: #f00; }
.slide-table .tiny {
  font-size: 30px;
  line-height: 44px;
}
.slide-table .big-cell {
  padding-top: 5px;
  font-size: 40.500px;
  line-height: 50.700px;
}
.canvas .r-one .big-cell {
  padding-top: 3px;
}
.h-osi { font-size: 42px; line-height: 50px; }
.h-layer { font-size: 35px; line-height: 44px; padding-top: 5px; }
.h-tcp { font-size: 35.500px; line-height: 45px; }
.h-other { font-size: 30.300px; line-height: 40px; }

/* thumbnail copy of the table */
.mini {
  width: 204px;
  font-size: 6px;
  line-height: 9px;
  filter: blur(.35px);
}
.slide-table.mini td {
  padding: 1px 0 0;
  height: 14px;
}
.slide-table.mini .r-tall td { height: 18px; }
.slide-table.mini .r-last td { height: 9px; padding: 0; line-height: 8px; }
.slide-table.mini .head td {
  height: 15px;
  padding-left: 1px;
  border-bottom-width: 1px;
  font-size: 6px;
  line-height: 7px;
}
.slide-table.mini .head .h-osi { font-size: 7px; }
.slide-table.mini .big-cell {
  white-space: nowrap;
  font-size: 6.500px;
  line-height: 8px;
}
.slide-table.mini .tiny { font-size: 5px; line-height: 8px; }

/* scrollbar */
.scrollbar {
  width: 22px;
  flex: none;
  margin-top: 2px;
  margin-bottom: 0;
  display: flex;
  flex-direction: column;
  background-color: #e6e6e6;
}
.sb-btn {
  height: 25px;
  flex: none;
  display: flex;
  align-items: center;
  justify-content: center;
  background-color: #fff;
  border: 1px solid #ababab;
  border-right: 0;
}
.sb-thumb {
  height: 195px;
  flex: none;
  margin-top: 21px;
  background-color: #fff;
  border-left: 1px solid #ababab;
  border-bottom: 1px solid #ababab;
  border-top: 1px solid #ababab;
}
.sb-track {
  flex: 1;
  background-color: #dcdcdc;
}
.sb-page {
  height: 26px;
  flex: none;
  display: flex;
  flex-direction: column;
  align-items: center;
  justify-content: center;
}
.sb-page:last-child {
  margin-bottom: 35px;
}
.tri-up, .tri-down {
  width: 0;
  height: 0;
  border-left: 6px solid transparent;
  border-right: 6px solid transparent;
}
.tri-up { border-bottom: 6px solid #777; }
.tri-down { border-top: 6px solid #777; }
.tri-stack { margin-top: 1px; }

/* status bar */
.status {
  position: relative;
  height: 32px;
  flex: none;
  font-size: 18.800px;
  line-height: 32px;
  color: #555;
}
.status > * {
  position: absolute;
}
.st-count { left: 3px; }
.st-book { left: 134px; top: 8px; }
.st-lang { left: 182px; }
.st-memo { left: 1104px; top: 4px; }
.st-memo-text { left: 1133px; }
.st-display { left: 1191px; top: 6px; }
.st-display-text { left: 1218px; }
.view {
  top: 0;
  height: 32px;
  display: flex;
  align-items: center;
  justify-content: center;
}
.view-on { left: 1374px; width: 60px; background-color: #c6c6c6; }
.view-sort { left: 1454px; width: 22px; }
.view-read { left: 1515px; width: 20px; }
.view-show { left: 1575px; width: 20px; }
.zoom-minus { left: 1623px; top: 16px; width: 12px; height: 1px; background-color: #444; }
.slider { left: 1643px; top: 16px; width: 148px; height: 2px; background-color: #aaa; }
.slider-tick { position: absolute; left: 74px; top: -5px; width: 1px; height: 12px; background-color: #aaa; }
.slider-knob { position: absolute; left: 45px; top: -12px; width: 8px; height: 26px; background-color: #777; }
.zoom-plus { left: 1797px; font-size: 20px; }
.zoom-val { left: 1829px; font-size: 17px; }
.st-fit { left: 1883px; top: 2px; }
```
